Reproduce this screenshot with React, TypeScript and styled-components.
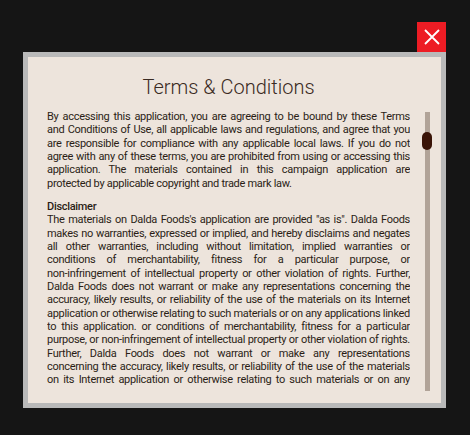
import React from "react";
import styled, { createGlobalStyle } from "styled-components";

const GlobalStyle = createGlobalStyle`
  html, body {
    margin: 0;
    padding: 0;
    background: #151515;
  }
  body {
    font-family: Roboto, "Liberation Sans", sans-serif;
  }
`;

const Page = styled.div`
  width: 470px;
  height: 435px;
  padding: 52px 0 0 23px;
  box-sizing: border-box;
`;

const ModalWrap = styled.div`
  position: relative;
  width: 423px;
`;

const CloseButton = styled.button`
  position: absolute;
  top: -30px;
  right: 0;
  width: 29px;
  height: 30px;
  padding: 0;
  border: 0;
  background: #ed1c24;
  display: flex;
  align-items: center;
  justify-content: center;
  cursor: pointer;
`;

const Modal = styled.div`
  height: 356px;
  box-sizing: border-box;
  border: 5px solid #b9b9b9;
  background: #ede4dc;
  display: flex;
  padding: 19px 9px 11px 19px;
  gap: 12px;
`;

const Column = styled.div`
  width: 363px;
  display: flex;
  flex-direction: column;
`;

const Title = styled.h1`
  margin: 0 0 11px;
  font-family: Roboto, sans-serif;
  font-weight: 300;
  font-size: 20px;
  line-height: 23px;
  color: #3a2a22;
  text-align: center;
`;

const Scroller = styled.div`
  height: 277px;
  overflow: hidden;
  color: #2b1e16;
  font-size: 11px;
  line-height: 13.33px;
  letter-spacing: -0.3px;
  text-align: justify;
`;

const Paragraph = styled.p`
  margin: 0 0 10px;
`;

const NoBreak = styled.span`
  white-space: nowrap;
`;

const Heading = styled.div`
  font-weight: 500;
`;

const ScrollColumn = styled.div`
  width: 10px;
  padding-top: 36px;
  display: flex;
  justify-content: center;
`;

const Track = styled.div`
  position: relative;
  width: 5px;
  height: 279px;
  background: #b1a398;
`;

const Thumb = styled.div`
  position: absolute;
  top: 20px;
  left: -2.5px;
  width: 10px;
  height: 18px;
  border-radius: 5px;
  background: #3a1408;
`;

export default function App() {
  return (
    <>
      <GlobalStyle />
      <Page>
        <ModalWrap>
          <CloseButton aria-label="Close">
            <svg width="16" height="16" viewBox="0 0 16 16">
              <path d="M1 1 L15 15 M15 1 L1 15" stroke="#fff" strokeWidth="1.8" />
            </svg>
          </CloseButton>
          <Modal>
            <Column>
              <Title>Terms &amp; Conditions</Title>
              <Scroller>
                <Paragraph>
                  By accessing this application, you are agreeing to be bound by these Terms and
                  Conditions of Use, all applicable laws and regulations, and agree that you are
                  responsible for compliance with any applicable local laws. If you do not agree
                  with any of these terms, you are prohibited from using or accessing this
                  application. The materials contained in this campaign application are{" "}
                  <NoBreak>protected by applicable</NoBreak> copyright and trade mark law.
                </Paragraph>
                <Heading>Disclaimer</Heading>
                <Paragraph>
                  The materials on Dalda Foods's application are provided "as is". Dalda Foods
                  makes no warranties, expressed or implied, and hereby disclaims and negates all
                  other warranties, including without limitation, implied warranties or conditions
                  of merchantability, fitness for a particular purpose, or{" "}
                  <NoBreak>non-infringement</NoBreak> of intellectual property or other violation
                  of rights. Further, Dalda Foods does not warrant or make any representations
                  concerning the accuracy, likely results, or reliability of the use of the
                  materials on its Internet application or otherwise relating to such materials or
                  on any applications linked to this application. or conditions of
                  merchantability, fitness for a particular purpose, or{" "}
                  <NoBreak>non-infringement</NoBreak> of intellectual property or other violation
                  of rights. Further, Dalda Foods does not warrant or make any representations{" "}
                  <NoBreak>concerning the accuracy,</NoBreak> likely results, or reliability of
                  the use of the materials on its Internet application or otherwise relating to
                  such materials or on any applications linked to this application.
                </Paragraph>
              </Scroller>
            </Column>
            <ScrollColumn>
              <Track>
                <Thumb />
              </Track>
            </ScrollColumn>
          </Modal>
        </ModalWrap>
      </Page>
    </>
  );
}
